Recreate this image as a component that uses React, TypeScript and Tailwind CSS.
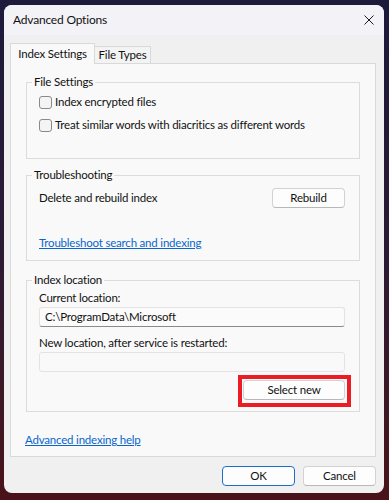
import React from "react";

const font = { fontFamily: 'Lato, "Noto Sans", sans-serif' };

function Checkbox({ label }: { label: string }) {
  return (
    <label className="flex h-[16px] items-center gap-[3px]">
      <span className="h-[13px] w-[13px] shrink-0 rounded-[3px] border border-[#8a8a8a] bg-[#f4f4f4]" />
      <span className="whitespace-nowrap">{label}</span>
    </label>
  );
}

function Button({ children, primary, className = "" }: { children: React.ReactNode; primary?: boolean; className?: string }) {
  return (
    <button
      className={`flex h-[20px] items-center justify-center rounded-[4px] border bg-[#fdfdfd] ${
        primary ? "border-[#1a6ec9]" : "border-[#d2d2d2] border-b-[#b8b8b8]"
      } ${className}`}
    >
      {children}
    </button>
  );
}

function Group({ title, children, className = "" }: { title: string; children: React.ReactNode; className?: string }) {
  return (
    <fieldset className={`mx-[15px] border border-[#dcdcdc] pl-[12px] pr-[14px] ${className}`}>
      <legend className="-ml-[7px] px-[2px] leading-[16px]">{title}</legend>
      {children}
    </fieldset>
  );
}

export default function App() {
  return (
    <div
      className="h-[500px] w-[389px] bg-linear-to-b from-[#1d1a3c] via-[#2a1a34] to-[#4a1219] pb-[7px] pl-[4px] pr-[5px] pt-[5px] text-[11.5px] tracking-[-0.2px] text-[#111]"
      style={font}
    >
      <div className="flex h-full flex-col overflow-hidden rounded-[8px] bg-[#f0f0f0]">
        {/* title bar */}
        <div className="flex h-[30px] shrink-0 items-center justify-between bg-[#f3f2f7] pl-[9px] pr-[10px]">
          <span className="text-[12px]">Advanced Options</span>
          <svg width="10" height="10" viewBox="0 0 10 10">
            <path d="M0.5 0.5 L9.5 9.5 M9.5 0.5 L0.5 9.5" stroke="#1b1b1b" strokeWidth="1" />
          </svg>
        </div>

        <div className="flex flex-1 flex-col pl-[6px] pr-[8px] pt-[8px]">
          {/* tabs */}
          <div className="relative z-10 flex h-[20px] items-end">
            <div className="-mb-px flex h-[21px] w-[85px] items-center justify-center border border-b-0 border-[#d9d9d9] bg-[#f9f9f9]">
              Index Settings
            </div>
            <div className="flex h-[17px] w-[56px] items-center justify-center border border-b-0 border-l-0 border-[#d9d9d9] bg-[#f3f3f3]">
              File Types
            </div>
          </div>

          {/* panel */}
          <div className="flex h-[394px] flex-col border border-[#d9d9d9] bg-[#f9f9f9]">
            <Group title="File Settings" className="mt-[10px] h-[85px]">
              <div className="mt-[4px] flex flex-col gap-[7px]">
                <Checkbox label="Index encrypted files" />
                <Checkbox label="Treat similar words with diacritics as different words" />
              </div>
            </Group>

            <Group title="Troubleshooting" className="mt-[8px] h-[94px]">
              <div className="mt-[5px] flex items-center justify-between">
                <span>Delete and rebuild index</span>
                <Button className="w-[73px]">Rebuild</Button>
              </div>
              <div className="mt-[27px] leading-[16px]">
                <a className="text-[#0a66cc] underline">Troubleshoot search and indexing</a>
              </div>
            </Group>

            <Group title="Index location" className="mt-[11px] h-[140px]">
              <div className="mt-[2px] leading-[16px]">Current location:</div>
              <div className="mt-[1px] flex h-[20px] items-center rounded-[3px] border border-[#e3e3e3] border-b-[#8a8a8a] bg-[#fbfbfb] px-[5px]">
                C:\ProgramData\Microsoft
              </div>
              <div className="mt-[8px] leading-[16px]">New location, after service is restarted:</div>
              <div className="mt-[1px] h-[20px] rounded-[3px] border border-[#e3e3e3] bg-[#f9f9f9]" />
              <div className="mt-[3px] flex justify-end">
                <div className="-mr-[6px] border-[4px] border-[#ec1c24] pb-[3px] pl-[1px] pr-[2px] pt-[1px]">
                  <Button className="w-[102px]">Select new</Button>
                </div>
              </div>
            </Group>

            <div className="ml-[14px] mt-[20px] leading-[16px]">
              <a className="text-[#0a66cc] underline">Advanced indexing help</a>
            </div>
          </div>

          {/* footer */}
          <div className="mt-[9px] flex justify-end gap-[8px]">
            <Button primary className="w-[73px]">OK</Button>
            <Button className="w-[73px]">Cancel</Button>
          </div>
        </div>
      </div>
    </div>
  );
}
